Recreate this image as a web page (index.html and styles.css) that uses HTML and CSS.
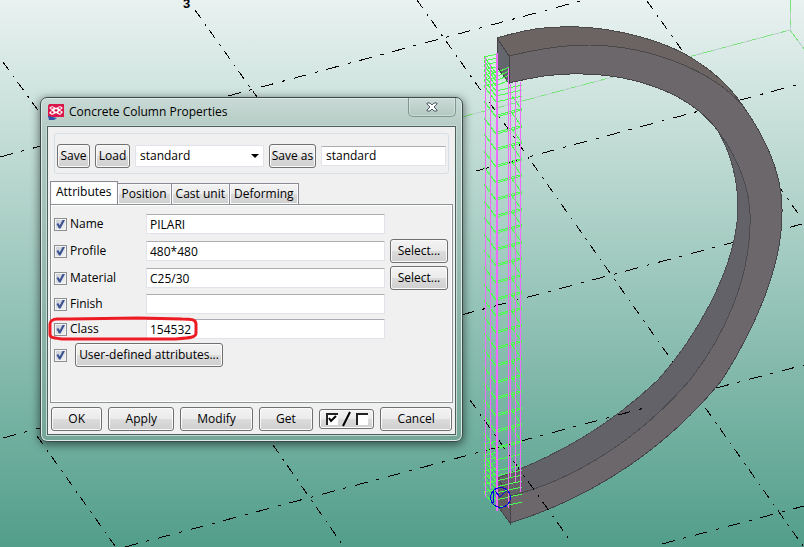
FILE: index.html
```
<!DOCTYPE html>
<html lang="en">
<head>
<meta charset="UTF-8">
<meta name="viewport" content="width=device-width, initial-scale=1.0">
<title>Concrete Column Properties</title>
<link rel="stylesheet" href="styles.css">
</head>
<body>
  <svg class="scene" viewBox="0 0 804 547" preserveAspectRatio="xMinYMin slice" aria-hidden="true">
    <!-- work area box -->
    <g class="work-area">
      <path class="work-base" d="M462 117 L790 30 L804 49 M790 0 V30" />
      <path class="work-dash" d="M462 117 L790 30 L804 49 M790 0 V30" />
    </g>

    <!-- grid lines behind the beam -->
    <g class="grid-flat">
      <path d="M228 96 L584 0" />
      <path d="M0 157 L41 146" />
      <path d="M476 171 L796 85" />
      <path d="M3 438 L40 428" />
      <path d="M461 315 L802 224" />
      <path d="M716 388 L804 365" />
      <path d="M662 544 L804 506" />
    </g>
    <g class="grid-steep">
      <path d="M3 62 L40 113" />
      <path d="M195 10 L257 97" />
      <path d="M417 0 L803 546" />
      <path d="M647 1 L802 219" />
      <path d="M273 445 L344 547" />
      <path d="M37 436 L115 546" />
    </g>

    <!-- curved beam -->
    <path class="beam-front" d="M497 38 C520 31 540 27 560 27 C600 25 650 36 683 53 C712 69 730 86 743 106 C765 137 783 175 782 213 C782 265 757 325 722 380 C670 444 598 496 510 523 L497 505 V478 C560 455 610 425 658 380 C694 340 736 270 738 210 C738 180 732 155 718 131 C690 93 635 75 583 74 C555 73 535 77 509 83 L497 67 Z" />
    <path class="beam-top" d="M497 38 C520 31 540 27 560 27 C600 25 650 36 683 53 C712 69 730 86 743 106 C712 70 650 46 590 45 C560 45 535 50 509 56 Z" />
    <path class="beam-inner" d="M718 131 C740 160 752 195 750 225 C749 280 725 335 690 380 C640 438 575 480 510 496 L497 478 C560 455 610 425 658 380 C694 340 736 270 738 210 C738 180 732 155 718 131 Z" />
    <path class="beam-cap" d="M497 38 L509 56 V83 L497 67 Z" />
    <path class="beam-cap-low" d="M497 478 L510 496 V523 L497 505 Z" />

    <g class="grid-flat">
      <path d="M125 547 L648 407" />
    </g>
    <g class="grid-steep">
      <path d="M470 400 L572 543" />
    </g>

    <!-- rebar cage, stirrups are added by the script below -->
    <g class="stirrups" id="stirrups"></g>
    <g class="bars">
      <path d="M485.500 57 V497 M490.500 64 V489 M508.500 68 V508 M510.500 84 V477 M515.500 82 V482 M520.500 82 V492" />
      <path class="bar-thick" d="M497 53 V511" />
    </g>

    <g class="handle">
      <circle cx="500.500" cy="497.500" r="10" />
      <path d="M493.500 490 V503 M495 491 L500 497 L506 491" />
    </g>

    <text class="grid-name" x="183" y="8">3</text>
  </svg>

  <main class="dialog">
    <header class="title-bar">
      <svg class="app-icon" viewBox="0 0 16 16" aria-hidden="true">
        <path fill="#d9174b" d="M1 0 H16 V13 H0 V2 Z" />
        <path fill="#2b55a8" d="M0 12 L9 14 L6 16 H1 Z" />
        <path fill="#fff" d="M1 4 L4 2 L8 4 L12 2 L15 4 L12 6 L15 8 L12 11 L8 9 L4 11 L1 9 L4 6 Z" />
        <path fill="#d9174b" d="M3 4 L4 3 L6 4 L4 5 Z M10 4 L12 3 L13 4 L12 5 Z M6 6 L8 5 L10 6 L8 8 Z M3 8 L4 7 L6 8 L4 10 Z M10 8 L12 7 L13 8 L12 10 Z" />
      </svg>
      <h1>Concrete Column Properties</h1>
      <button type="button" class="close" aria-label="Close">
        <svg viewBox="0 0 12 10" aria-hidden="true">
          <path d="M1 1 H4 L6 3 L8 1 H11 V2 L8 5 L11 8 V9 H8 L6 7 L4 9 H1 V8 L4 5 L1 2 Z" />
        </svg>
      </button>
    </header>

    <form class="client" onsubmit="return false">
      <div class="file-bar">
        <button type="button">Save</button>
        <button type="button">Load</button>
        <div class="preset">
          <select aria-label="Saved settings">
            <option>standard</option>
          </select>
        </div>
        <button type="button">Save as</button>
        <input type="text" class="save-name" value="standard" aria-label="Save as name">
      </div>

      <div class="tabs" role="tablist">
        <button type="button" role="tab" class="tab active" aria-selected="true">Attributes</button>
        <button type="button" role="tab" class="tab">Position</button>
        <button type="button" role="tab" class="tab">Cast unit</button>
        <button type="button" role="tab" class="tab">Deforming</button>
      </div>

      <div class="panel" role="tabpanel">
        <label class="field"><input type="checkbox" checked>Name</label>
        <input type="text" value="PILARI" aria-label="Name">

        <label class="field"><input type="checkbox" checked>Profile</label>
        <input type="text" value="480*480" aria-label="Profile">
        <button type="button">Select...</button>

        <label class="field"><input type="checkbox" checked>Material</label>
        <input type="text" value="C25/30" aria-label="Material">
        <button type="button">Select...</button>

        <label class="field"><input type="checkbox" checked>Finish</label>
        <input type="text" value="" aria-label="Finish">

        <label class="field marked"><input type="checkbox" checked>Class
          <svg class="mark" viewBox="0 0 150 26" aria-hidden="true">
            <path d="M9 3 C5 3 2 5 2 8 L2 18 C2 22 5 22 14 23 L126 23 C140 22 148 22 148 17 L148 8 C148 3 142 3 134 3 L90 2 L22 3 Z" />
          </svg>
        </label>
        <input type="text" value="154532" aria-label="Class">

        <div class="user-row">
          <input type="checkbox" checked aria-label="User-defined attributes">
          <button type="button">User-defined attributes...</button>
        </div>
      </div>

      <footer class="actions">
        <button type="button" class="ok">OK</button>
        <button type="button" class="apply">Apply</button>
        <button type="button" class="modify">Modify</button>
        <button type="button" class="get">Get</button>
        <button type="button" class="toggle" aria-label="Toggle all">
          <svg viewBox="0 0 44 16" aria-hidden="true">
            <path fill="#fff" d="M1 2 H13 V14 H1 Z M31 2 H43 V14 H31 Z" />
            <path fill="none" stroke="#222" stroke-width="2" d="M2 14 V3 H13 M32 14 V3 H43" />
            <path fill="none" stroke="#000" stroke-width="2" d="M4 7 L6 10 L11 5 M18 15 L25 1" />
          </svg>
        </button>
        <button type="button" class="cancel">Cancel</button>
      </footer>
    </form>
  </main>

  <script>
    // height of the front corner of every stirrup, closer together near the ends
    const dense = [73, 77, 81, 86, 91, 96, 102, 460, 471, 476, 481, 487, 493, 500, 508];
    let d = '';
    dense.forEach(function (y) {
      const end = y < 90 ? 509 : 522;
      d += `M497 ${y - 19} L484 ${y - 16} L496 ${y} L${end} ${y - 6} `;
    });
    for (let i = 0; i < 21; i++) {
      const y = Math.round(117 + i * 16.6);
      d += `M484 ${y - 16} L496 ${y} L522 ${y - 7} L512 ${y - 21} M497 ${y - 2} L520 ${y - 8} `;
    }
    const path = document.createElementNS('http://www.w3.org/2000/svg', 'path');
    path.setAttribute('d', d);
    document.getElementById('stirrups').appendChild(path);
  </script>
</body>
</html>
```
FILE: styles.css
```
* {
  box-sizing: border-box;
}

body {
  margin: 0;
  min-height: 100vh;
  position: relative;
  overflow: hidden;
  font-family: "Segoe UI", "Open Sans", "Noto Sans", sans-serif;
  font-size: 12px;
  line-height: 16px;
  color: #000;
  background: linear-gradient(#e9f2f0, #529e8a);
}

button,
input,
select {
  font: inherit;
  color: inherit;
  margin: 0;
}

/* model view */
.scene {
  position: absolute;
  inset: 0;
  width: 100%;
  height: 100%;
  shape-rendering: crispEdges;
}

.scene path {
  fill: none;
  stroke-width: 1;
}

.work-base {
  stroke: #b9cfc9;
}

.work-dash {
  stroke: #7be37b;
  stroke-dasharray: 12 8 5 6;
}

.grid-flat {
  stroke: #000;
  stroke-dasharray: 13 9 3 9;
}

.grid-steep {
  stroke: #000;
  stroke-dasharray: 10 7 2 6;
}

.scene .beam-front {
  fill: #6b676b;
  stroke: #454347;
}

.scene .beam-top {
  fill: #6b6462;
  stroke: #4b4849;
}

.scene .beam-inner {
  fill: #636268;
  stroke: #4b4a4f;
}

.scene .beam-cap,
.scene .beam-cap-low {
  fill: #64666d;
  stroke: #454347;
}

.scene .beam-cap-low {
  fill: #625d60;
}

.bars {
  stroke: #ee6cf8;
}

.scene .bar-thick {
  stroke-width: 2;
}

.stirrups {
  stroke: #4dff4d;
}

.handle {
  fill: none;
  stroke: #0000e6;
}

.grid-name {
  font: bold 13px "Liberation Sans", sans-serif;
}

/* window */
.dialog {
  position: absolute;
  left: 40px;
  top: 97px;
  width: 423px;
  padding: 0 6px 6px;
  border: 1px solid #3c4b48;
  border-radius: 7px;
  background: linear-gradient(#c9dad5, #b5cbc4 30px, #74a698);
  box-shadow: inset 0 0 0 1px #dcebe7, 0 2px 8px 1px rgba(0, 0, 0, 0.5);
}

.title-bar {
  display: flex;
  align-items: center;
  gap: 5px;
  height: 28px;
}

.title-bar h1 {
  flex: 1;
  margin: 0;
  font-size: 12px;
  font-weight: normal;
}

.app-icon {
  width: 16px;
  height: 16px;
  margin-left: 1px;
}

.close {
  align-self: flex-start;
  width: 48px;
  height: 19px;
  padding: 0;
  border: 1px solid #809690;
  border-top: none;
  border-radius: 0 0 5px 5px;
  background: linear-gradient(#cbdad6, #b4c9c2);
  box-shadow: inset 0 0 0 1px rgba(255, 255, 255, 0.3);
}

.close svg {
  display: block;
  width: 12px;
  height: 10px;
  margin: 0 auto;
}

.close path {
  fill: #fff;
  stroke: #4e5a64;
}

.client {
  padding: 6px 2px 3px;
  border: 1px solid #4d5f5b;
  background: #f0f0f0;
  box-shadow: 0 0 0 1px #c5dad4;
}

.client button {
  height: 24px;
  padding: 0;
  border: 1px solid #707070;
  border-radius: 3px;
  background: linear-gradient(#f3f3f3, #ebebeb 50%, #dcdcdc 50%, #cfcfcf);
  box-shadow: inset 0 0 0 1px #fafafa;
  white-space: nowrap;
}

.client input[type="text"],
.client select {
  width: 100%;
  height: 20px;
  padding: 0 4px;
  border: 1px solid #e2e3ea;
  border-top-color: #abadb3;
  border-radius: 1px;
  background: #fff;
}

.client input[type="checkbox"] {
  appearance: none;
  flex: none;
  width: 13px;
  height: 13px;
  border: 1px solid #8e8f8f;
  background: linear-gradient(135deg, #c4cad2, #f6f6f6);
  box-shadow: inset 0 0 0 1px #f4f4f4;
}

.client input[type="checkbox"]:checked::before {
  content: "";
  display: block;
  width: 9px;
  height: 9px;
  margin: 1px;
  background: #3f5593;
  clip-path: polygon(5% 50%, 25% 40%, 42% 65%, 75% 0, 100% 5%, 50% 100%, 32% 100%);
}

.file-bar {
  display: grid;
  grid-template-columns: 33px 35px 129px 47px 1fr;
  gap: 5px;
  align-items: center;
  height: 41px;
  margin: 0 4px;
  padding: 4px 2px 0;
  border: 1px solid #d5dfe5;
  border-radius: 3px;
}

.preset {
  position: relative;
}

.client .file-bar select,
.client .save-name {
  padding: 0 3px;
}

.client .preset select {
  display: block;
  appearance: none;
  height: 22px;
  padding: 0 4px;
  border-color: #e2e3ea;
  text-indent: 0;
}

.preset::after {
  content: "";
  position: absolute;
  right: 5px;
  top: 9px;
  border: 4px solid transparent;
  border-top-color: #000;
  border-bottom: none;
  pointer-events: none;
}

.tabs {
  display: flex;
  align-items: flex-end;
  margin-top: 7px;
}

.client .tab {
  height: 21px;
  margin-left: -1px;
  padding: 0 4px;
  border: 1px solid #898c95;
  border-bottom: none;
  border-radius: 0;
}

.client .tab.active {
  height: 23px;
  margin-left: 0;
  padding: 0 5px 2px;
  background: #fff;
}

.panel {
  display: grid;
  grid-template-columns: 92px 1fr 58px;
  grid-template-rows: 24px 24px 24px 22px 22px 24px;
  gap: 3px 0;
  align-items: center;
  padding: 7px 4px 35px 3px;
  border: 1px solid #8c9497;
  box-shadow: inset 0 0 0 1px #fff;
}

.panel > input {
  grid-column: 2;
}

.panel > button {
  grid-column: 3;
}

.panel > input[type="text"] {
  width: calc(100% - 5px);
  padding: 0 3px;
}

.field {
  grid-column: 1;
  display: flex;
  align-items: center;
  gap: 3px;
}

.marked {
  position: relative;
}

.mark {
  position: absolute;
  left: -6px;
  top: -5px;
  width: 150px;
  height: 26px;
  z-index: 1;
  pointer-events: none;
}

.mark path {
  fill: none;
  stroke: #ed1c24;
  stroke-width: 3;
}

.user-row {
  grid-column: 1 / -1;
  display: flex;
  align-items: center;
  gap: 8px;
}

.user-row button {
  width: 148px;
}

.actions {
  display: flex;
  align-items: center;
  gap: 6px;
  margin: 4px 1px 0;
}

.actions .ok {
  flex: 51;
}

.actions .apply {
  flex: 66;
}

.actions .modify {
  flex: 73;
}

.actions .get {
  flex: 54;
}

.actions .cancel {
  flex: 72;
}

.actions .toggle {
  flex: 55;
  height: 20px;
}

.toggle svg {
  display: block;
  width: 44px;
  height: 16px;
  margin: 0 auto;
}
```
